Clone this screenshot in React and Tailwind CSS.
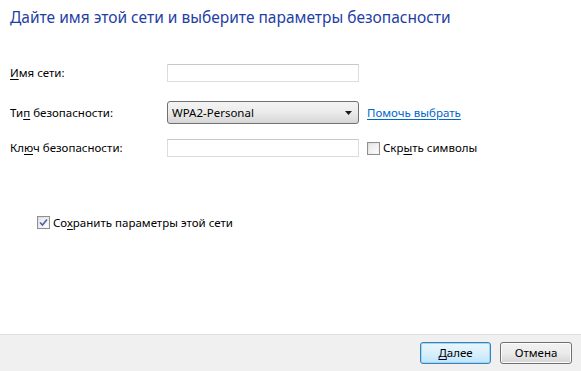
import React from 'react';

const font = { fontFamily: '"Noto Sans", "Open Sans", sans-serif' };

const Key = ({ children }) => <span className="underline underline-offset-2">{children}</span>;

const TextBox = () => (
  <div className="w-[192px] h-[18px] border border-[#dcdcdc] border-t-[#c8c8c8] bg-white" />
);

const Check = ({ checked }) => (
  <div className="w-[13px] h-[13px] border border-[#8f8f8f] bg-gradient-to-br from-[#dcdcdc] to-[#f8f8f8] p-[1px] flex items-center justify-center">
    <div className="w-full h-full bg-gradient-to-br from-[#e6e6e6] to-[#fdfdfd] flex items-center justify-center">
      {checked && (
        <svg width="9" height="9" viewBox="0 0 9 9">
          <path d="M1 4.5 L3.5 7 L8 1.5" fill="none" stroke="#4a5fb0" strokeWidth="1.6" />
        </svg>
      )}
    </div>
  </div>
);

export default function App() {
  return (
    <div className="w-[581px] h-[371px] flex flex-col bg-white text-[11.5px] text-black" style={font}>
      <div className="flex-1 pl-[10px]">
        <h1 className="mt-[6px] text-[15.5px] leading-[22px] text-[#1f3fa6]">
          Дайте имя этой сети и выберите параметры безопасности
        </h1>

        <div className="mt-[36px] flex items-center h-[18px]">
          <div className="w-[157px]"><Key>И</Key>мя сети:</div>
          <TextBox />
        </div>

        <div className="mt-[19px] flex items-center h-[23px]">
          <div className="w-[157px]">Ти<Key>п</Key> безопасности:</div>
          <div className="w-[192px] h-[23px] rounded-[3px] border border-[#707070] bg-gradient-to-b from-[#f4f4f4] via-[#ebebeb] to-[#d6d6d6] flex items-center justify-between pl-[4px] pr-[5px]">
            <span>WPA2-Personal</span>
            <svg width="8" height="4" viewBox="0 0 8 4">
              <path d="M0 0 H7 L3.5 4 Z" fill="#1a1a1a" />
            </svg>
          </div>
          <a className="ml-[8px] text-[#0066cc] underline underline-offset-2">Помочь выбрать</a>
        </div>

        <div className="mt-[15px] flex items-center h-[18px]">
          <div className="w-[157px]">Кл<Key>ю</Key>ч безопасности:</div>
          <TextBox />
          <div className="ml-[8px] flex items-center gap-[3px]">
            <Check />
            <span>Скр<Key>ы</Key>ть символы</span>
          </div>
        </div>

        <div className="mt-[57px] ml-[27px] flex items-center gap-[3px]">
          <Check checked />
          <span>Со<Key>х</Key>ранить параметры этой сети</span>
        </div>
      </div>

      <div className="h-[37px] border-t border-[#dfdfdf] bg-[#f0f0f0] flex items-center justify-end gap-[9px] pr-[9px]">
        <button className="w-[71px] h-[22px] rounded-[3px] border border-[#3c7fb1] bg-gradient-to-b from-[#eaf6fd] via-[#d9f0fc] to-[#bee6fd] shadow-[inset_0_0_0_1px_#9ed8f8]">
          <Key>Д</Key>алее
        </button>
        <button className="w-[72px] h-[22px] rounded-[3px] border border-[#707070] bg-gradient-to-b from-[#f2f2f2] via-[#ebebeb] to-[#d5d5d5] shadow-[inset_0_0_0_1px_#fbfbfb]">
          Отмена
        </button>
      </div>
    </div>
  );
}
